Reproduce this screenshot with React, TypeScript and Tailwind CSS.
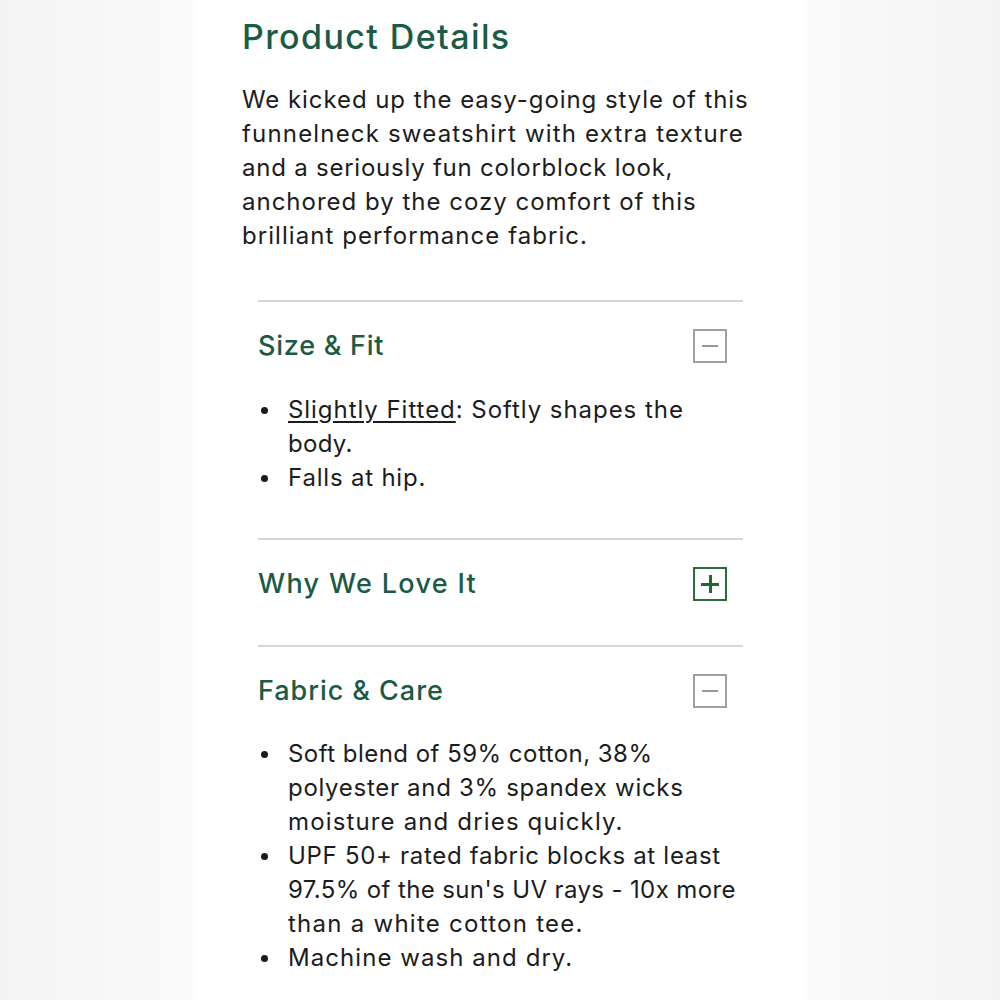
import React from "react";

const font = { fontFamily: "Inter, 'Noto Sans', sans-serif" };

type Line = { t: React.ReactNode; ls: string };

function Bullet({ lines }: { lines: Line[] }) {
  return (
    <li className="flex">
      <span className="w-[30px] shrink-0 flex justify-start pl-[3px]">
        <span className="mt-[14px] block h-[7px] w-[7px] rounded-full bg-[#1a1a1a]" />
      </span>
      <span className="flex flex-col">
        {lines.map((l, i) => (
          <span key={i} className="whitespace-nowrap" style={{ letterSpacing: l.ls }}>{l.t}</span>
        ))}
      </span>
    </li>
  );
}

function Minus() {
  return (
    <span className="flex h-[34px] w-[34px] items-center justify-center border-2 border-[#a0a0a0]">
      <span className="block h-[2px] w-[16px] bg-[#999999]" />
    </span>
  );
}

function Plus() {
  return (
    <span className="relative flex h-[34px] w-[34px] items-center justify-center border-2 border-[#2b6d34]">
      <span className="absolute block h-[3px] w-[18px] bg-[#1f6a2a]" />
      <span className="absolute block h-[18px] w-[3px] bg-[#1f6a2a]" />
    </span>
  );
}

function Header({ title, ls, icon }: { title: string; ls: string; icon: React.ReactNode }) {
  return (
    <div className="flex items-center justify-between pt-[14px] h-[74px] pr-[16px]">
      <span className="text-[27px] font-medium text-[#1b5a43]" style={{ letterSpacing: ls }}>{title}</span>
      {icon}
    </div>
  );
}

const para: Line[] = [
  { t: "We kicked up the easy-going style of this", ls: "0.93px" },
  { t: "funnelneck sweatshirt with extra texture", ls: "1.18px" },
  { t: "and a seriously fun colorblock look,", ls: "0.77px" },
  { t: "anchored by the cozy comfort of this", ls: "1px" },
  { t: "brilliant performance fabric.", ls: "1.06px" },
];

export default function App() {
  return (
    <div className="flex min-h-[1000px] w-full justify-center bg-[linear-gradient(90deg,#f4f4f4_0%,#f8f8f8_12%,#fafafa_19%,#ffffff_19.5%,#ffffff_80.5%,#fafafa_81%,#f7f7f7_90%,#f4f4f4_100%)]" style={font}>
      <div className="w-[610px] bg-white pl-[47px] pr-[40px] text-[#1c1c1c]">
        <h2 className="pt-[14px] text-[34px] leading-[46px] font-medium text-[#1b5a43] tracking-[1.4px]">Product Details</h2>
        <p className="mt-[23px] text-[24px] leading-[34px] flex flex-col">
          {para.map((l, i) => (
            <span key={i} className="whitespace-nowrap" style={{ letterSpacing: l.ls }}>{l.t}</span>
          ))}
        </p>

        <div className="ml-[16px] mt-[47px] w-[485px]">
          <div className="border-t-2 border-[#d6d6d6]">
            <Header title="Size & Fit" ls="0.75px" icon={<Minus />} />
            <ul className="mt-[17px] pb-[43px] text-[24px] leading-[34px]">
              <Bullet
                lines={[
                  { t: <><span className="underline underline-offset-[3px] decoration-[1.5px]">Slightly Fitted</span>: Softly shapes the</>, ls: "0.95px" },
                  { t: "body.", ls: "0.3px" },
                ]}
              />
              <Bullet lines={[{ t: "Falls at hip.", ls: "0.8px" }]} />
            </ul>
          </div>

          <div className="border-t-2 border-[#d6d6d6]">
            <Header title="Why We Love It" ls="1.33px" icon={<Plus />} />
            <div className="h-[31px]" />
          </div>

          <div className="border-t-2 border-[#d6d6d6]">
            <Header title="Fabric & Care" ls="0.95px" icon={<Minus />} />
            <ul className="mt-[16px] pb-[24px] text-[24px] leading-[34px]">
              <Bullet
                lines={[
                  { t: "Soft blend of 59% cotton, 38%", ls: "0.47px" },
                  { t: "polyester and 3% spandex wicks", ls: "0.7px" },
                  { t: "moisture and dries quickly.", ls: "1.15px" },
                ]}
              />
              <Bullet
                lines={[
                  { t: "UPF 50+ rated fabric blocks at least", ls: "0.7px" },
                  { t: "97.5% of the sun's UV rays - 10x more", ls: "0.38px" },
                  { t: "than a white cotton tee.", ls: "1.26px" },
                ]}
              />
              <Bullet lines={[{ t: "Machine wash and dry.", ls: "1.06px" }]} />
            </ul>
          </div>
        </div>
      </div>
    </div>
  );
}
